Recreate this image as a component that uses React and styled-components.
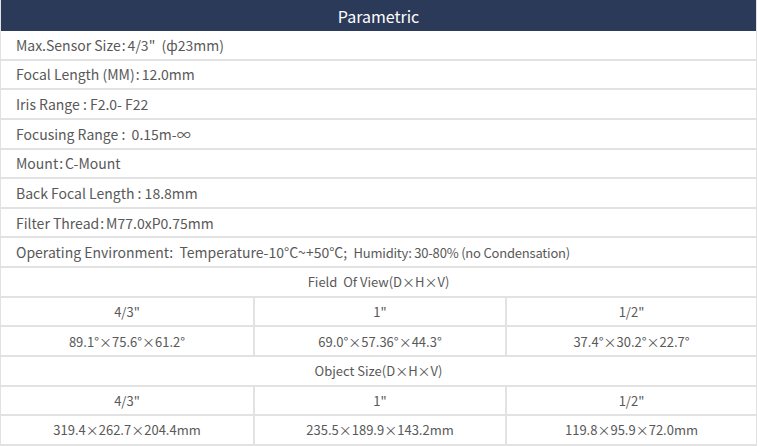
import React from 'react';
import styled, { createGlobalStyle } from 'styled-components';

const GlobalStyle = createGlobalStyle`
  html, body {
    margin: 0;
    padding: 0;
    background: #ffffff;
  }
  body {
    font-family: "Noto Sans CJK SC", "Noto Sans", sans-serif;
  }
`;

const Table = styled.div`
  width: 757px;
  border-left: 1px solid #e2e2e2;
  border-right: 1px solid #e2e2e2;
  box-sizing: border-box;
  color: #595959;
  font-size: 14px;
`;

const Header = styled.div`
  height: 31px;
  background: #2c3a59;
  color: #ffffff;
  font-size: 16px;
  display: flex;
  align-items: center;
  justify-content: center;
`;

const Row = styled.div`
  height: 29.64px;
  box-sizing: border-box;
  border-bottom: 2px solid #e2e2e2;
  display: grid;
  grid-template-columns: ${p => (p.$cols === 3 ? '252px 252px 1fr' : '1fr')};
`;

const Cell = styled.div`
  display: flex;
  align-items: center;
  justify-content: ${p => (p.$center ? 'center' : 'flex-start')};
  padding-left: ${p => (p.$center ? '0' : '15px')};
  border-left: ${p => (p.$divider ? '2px solid #e2e2e2' : 'none')};
  font-size: ${p => (p.$center ? '13px' : '14px')};
  white-space: pre;
`;

const Colon = styled.span`
  margin: 0 2px 0 1px;
`;

const Small = styled.span`
  font-size: 13px;
  letter-spacing: -0.2px;
`;

// '：' marks a tight colon with a little room either side
const specs = [
  'Max.Sensor Size：4/3"  (ф23mm)',
  'Focal Length (MM)：12.0mm',
  'Iris Range : F2.0- F22',
  'Focusing Range :  0.15m-∞',
  'Mount：C-Mount',
  'Back Focal Length : 18.8mm',
  'Filter Thread：M77.0xP0.75mm',
];

const sizes = ['4/3"', '1"', '1/2"'];

const sections = [
  {
    title: 'Field  Of View(D×H×V)',
    values: ['89.1°×75.6°×61.2°', '69.0°×57.36°×44.3°', '37.4°×30.2°×22.7°'],
  },
  {
    title: 'Object Size(D×H×V)',
    values: ['319.4×262.7×204.4mm', '235.5×189.9×143.2mm', '119.8×95.9×72.0mm'],
  },
];

const SpecText = ({ text }) => {
  const [label, value] = text.split('：');
  if (value === undefined) return text;
  return (
    <>
      {label}
      <Colon>:</Colon>
      {value}
    </>
  );
};

const ThreeRow = ({ items }) => (
  <Row $cols={3}>
    {items.map((item, i) => (
      <Cell key={i} $center $divider={i > 0}>{item}</Cell>
    ))}
  </Row>
);

export default function App() {
  return (
    <>
      <GlobalStyle />
      <Table>
        <Header>Parametric</Header>
        {specs.map(s => (
          <Row key={s}>
            <Cell><SpecText text={s} /></Cell>
          </Row>
        ))}
        <Row>
          <Cell>
            {'Operating Environment:  Temperature-10°C~+50°C;  '}
            <Small>Humidity: 30-80% (no Condensation)</Small>
          </Cell>
        </Row>
        {sections.map(sec => (
          <React.Fragment key={sec.title}>
            <Row>
              <Cell $center>{sec.title}</Cell>
            </Row>
            <ThreeRow items={sizes} />
            <ThreeRow items={sec.values} />
          </React.Fragment>
        ))}
      </Table>
    </>
  );
}
